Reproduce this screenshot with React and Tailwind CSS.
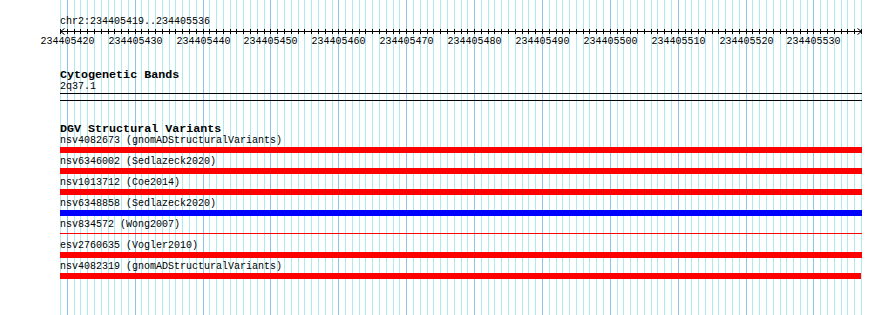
import React from "react";

const START = 234405419;
const N = 118;
const X0 = 60;
const W = 801;
const xs = Array.from({ length: N + 1 }, (_, k) => Math.round(X0 + (k * W) / N));

function Grid() {
  return (
    <svg className="absolute inset-0" width="890" height="315" shapeRendering="crispEdges">
      {xs.map((x, k) => {
        const major = (START + k) % 10 === 0;
        return (
          <line
            key={k}
            x1={x + 0.5}
            x2={x + 0.5}
            y1={0}
            y2={315}
            stroke={major ? "#8ec4e8" : "#aeeaee"}
            strokeWidth="1"
          />
        );
      })}
    </svg>
  );
}

function Ruler() {
  const labels = [];
  xs.forEach((x, k) => {
    if ((START + k) % 10 === 0) labels.push({ x, v: START + k });
  });
  return (
    <svg width="890" height="18" className="block overflow-visible">
      <g shapeRendering="crispEdges" stroke="#000" strokeWidth="1">
        <line x1={60} x2={862} y1={3.5} y2={3.5} />
        {xs.map((x, k) => (
          <line key={k} x1={x + 0.5} x2={x + 0.5} y1={1} y2={6} />
        ))}
      </g>
      <polyline points="64.5,0.5 60.5,3.5 64.5,6.5" fill="none" stroke="#000" strokeWidth="1" />
      <polyline points="857.5,0.5 861.5,3.5 857.5,6.5" fill="none" stroke="#000" strokeWidth="1" />
      {labels.map((l) => (
        <text
          key={l.v}
          x={l.x + 0.5}
          y={16}
          textAnchor="middle"
          fontFamily="'Liberation Mono', 'DejaVu Sans Mono', monospace"
          fontSize="10"
          fill="#000"
        >
          {l.v}
        </text>
      ))}
    </svg>
  );
}

const rows = [
  { name: "nsv4082673 (gnomADStructuralVariants)", kind: "red" },
  { name: "nsv6346002 (Sedlazeck2020)", kind: "red" },
  { name: "nsv1013712 (Coe2014)", kind: "red" },
  { name: "nsv6348858 (Sedlazeck2020)", kind: "blue" },
  { name: "nsv834572 (Wong2007)", kind: "thin" },
  { name: "esv2760635 (Vogler2010)", kind: "red" },
  { name: "nsv4082319 (gnomADStructuralVariants)", kind: "redShort" },
];

function Bar({ kind }) {
  if (kind === "red") return <div className="h-[6px] w-[802px] bg-[#ff0000]" />;
  if (kind === "redShort") return <div className="h-[6px] w-[801px] bg-[#ff0000]" />;
  if (kind === "blue") return <div className="h-[6px] w-[802px] bg-[#0000ff]" />;
  return (
    <div className="h-[6px] w-[802px] pt-[2px]">
      <div className="h-[1px] w-full bg-[#ff0000]" />
    </div>
  );
}

export default function App() {
  return (
    <div
      className="relative h-[315px] w-[890px] overflow-hidden bg-white text-black"
      style={{ fontFamily: "'Liberation Mono', 'DejaVu Sans Mono', monospace" }}
    >
      <Grid />
      <div className="relative">
        <div className="pl-[60px] pt-[16px] text-[10px] leading-[12px]">chr2:234405419..234405536</div>
        <Ruler />
        <div className="pl-[60px]">
          <div className="mt-[24px] h-[11px] text-[11.7px] font-bold leading-[11px]">Cytogenetic Bands</div>
          <div className="h-[11px] text-[10px] leading-[11px]">2q37.1</div>
          <div className="mt-[1px] h-[8px] w-[802px] border-y border-black" />
          <div className="mt-[22px] h-[9px] text-[11.7px] font-bold leading-[12px]">DGV Structural Variants</div>
          <div className="flex flex-col">
            {rows.map((r) => (
              <div key={r.name} className="flex flex-col">
                <div className="h-[15px] pt-[3px] text-[10px] leading-[12px]">{r.name}</div>
                <Bar kind={r.kind} />
              </div>
            ))}
          </div>
        </div>
      </div>
    </div>
  );
}
